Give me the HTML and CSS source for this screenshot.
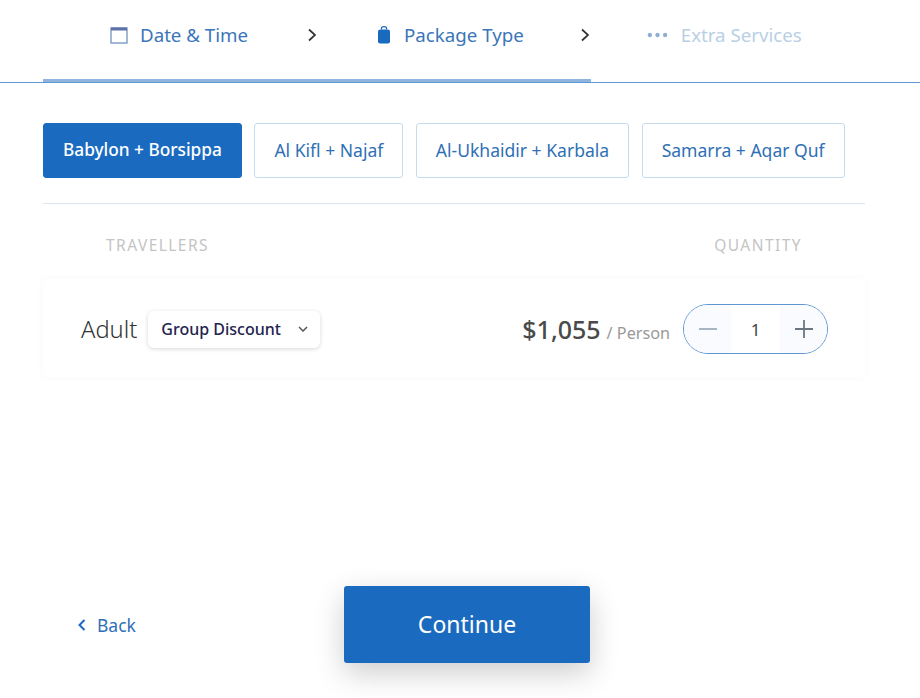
FILE: index.html
```html
<!DOCTYPE html>
<html lang="en">
<head>
<meta charset="utf-8">
<title>Package Type</title>
<link rel="stylesheet" href="styles.css">
</head>
<body>
<header class="steps">
  <div class="step">
    <svg class="icon cal" viewBox="0 0 18 18" width="18" height="18"><rect x="1" y="2" width="16" height="15" fill="none" stroke="#6f93c4" stroke-width="1.3"/><rect x="1" y="1.5" width="16" height="3" fill="#5f6fa8"/></svg>
    <span>Date &amp; Time</span>
  </div>
  <svg class="chev" viewBox="0 0 10 14" width="10" height="14"><path d="M2 1.5 L8 7 L2 12.5" fill="none" stroke="#333" stroke-width="1.7"/></svg>
  <div class="step">
    <svg class="icon bag" viewBox="0 0 14 18" width="14" height="18"><path d="M4.5 3.5V2.2C4.5 1.2 5.2.6 7 .6s2.5.6 2.5 1.6v1.3" fill="none" stroke="#1a6bc0" stroke-width="1.2"/><rect x="1" y="3.5" width="12" height="14" rx="2" fill="#1a6bc0"/></svg>
    <span>Package Type</span>
  </div>
  <svg class="chev second" viewBox="0 0 10 14" width="10" height="14"><path d="M2 1.5 L8 7 L2 12.5" fill="none" stroke="#333" stroke-width="1.7"/></svg>
  <div class="step off">
    <svg class="icon dots" viewBox="0 0 22 6" width="21" height="6"><circle cx="3" cy="3" r="2.3"/><circle cx="11" cy="3" r="2.3"/><circle cx="19" cy="3" r="2.3"/></svg>
    <span>Extra Services</span>
  </div>
  <div class="progress"></div>
</header>

<nav class="tabs">
  <button class="tab active">Babylon + Borsippa</button>
  <button class="tab">Al Kifl + Najaf</button>
  <button class="tab">Al-Ukhaidir + Karbala</button>
  <button class="tab">Samarra + Aqar Quf</button>
</nav>

<div class="heads">
  <span>TRAVELLERS</span>
  <span>QUANTITY</span>
</div>

<section class="row">
  <span class="kind">Adult</span>
  <div class="select">
    <span>Group Discount</span>
    <svg viewBox="0 0 10 6" width="10" height="6"><path d="M1 1 L5 5 L9 1" fill="none" stroke="#555" stroke-width="1.5"/></svg>
  </div>
  <div class="price"><b>$1,055</b><span>/ Person</span></div>
  <div class="qty">
    <span class="qbtn minus"><svg viewBox="0 0 18 18" width="18" height="18"><path d="M0 9H18" stroke="#a9b4c2" stroke-width="2"/></svg></span>
    <span class="num">1</span>
    <span class="qbtn plus"><svg viewBox="0 0 18 18" width="18" height="18"><path d="M0 9H18M9 0V18" stroke="#6c7680" stroke-width="1.8"/></svg></span>
  </div>
</section>

<footer class="foot">
  <a class="back"><svg viewBox="0 0 8 12" width="8" height="12"><path d="M6.5 1 L1.5 6 L6.5 11" fill="none" stroke="#1a6bc0" stroke-width="2"/></svg>Back</a>
  <button class="cta">Continue</button>
</footer>
</body>
</html>
```
FILE: styles.css
```css
* { box-sizing: border-box; }
html, body { margin: 0; height: 100%; background: #fff; }
body { font-family: "Noto Sans", "Open Sans", sans-serif; color: #333; overflow: hidden; }

.steps {
  position: relative;
  display: flex;
  align-items: center;
  height: 83px;
  padding: 0 0 13px 110px;
  border-bottom: 1px solid #5f97d3;
}
.step { display: flex; align-items: center; color: #3a76b8; font-size: 18.7px; line-height: 24px; }
.step .icon { flex: none; }
.cal { margin-right: 12px; }
.bag { margin-right: 13px; }
.dots { margin-right: 13px; fill: #8fb0d6; }
.step.off { color: #b9cfe6; }
.chev { flex: none; margin: 0 60px 0 59px; }
.chev.second { margin: 0 57px 0 56px; }
.progress {
  position: absolute;
  left: 43px;
  bottom: 0;
  width: 548px;
  height: 3px;
  background: #8fb4de;
}

.tabs {
  display: flex;
  gap: 12.5px;
  margin: 40px 55px 0 43px;
  padding-bottom: 25px;
  border-bottom: 1px solid #d9e4ec;
}
.tab {
  height: 55px;
  padding: 0 19px 2px;
  background: #fff;
  border: 1px solid #c4dcee;
  border-radius: 3px;
  color: #2f70b5;
  font: 400 17.55px "Noto Sans", sans-serif;
}
.tab.active { background: #1a6bc0; border-color: #1a6bc0; color: #fff; font-weight: 500; font-size: 17.25px; }

.heads {
  display: flex;
  justify-content: space-between;
  margin: 31px 118px 0 106px;
  color: #c4c4c4;
  font-size: 15.5px;
  line-height: 20px;
  letter-spacing: 1.45px;
}

.row {
  display: flex;
  align-items: center;
  height: 98px;
  margin: 24px 55px 0 43px;
  padding: 2px 37px 0 38px;
  background: #fff;
  box-shadow: 0 0 8px rgba(0, 0, 0, .03);
}
.kind { font-size: 23.7px; font-weight: 300; color: #333; margin-right: 11px; }
.select {
  display: flex;
  align-items: center;
  justify-content: space-between;
  width: 172px;
  height: 37px;
  padding: 0 12px 0 13px;
  border-radius: 6px;
  background: #fff;
  box-shadow: 0 1px 4px rgba(0, 0, 0, .16);
  color: #23234f;
  font-size: 16px;
  font-weight: 500;
}
.price { display: flex; align-items: baseline; margin-left: auto; }
.price b { font-size: 25px; font-weight: 500; color: #4a4a4a; }
.price span { margin-left: 6px; font-size: 16.2px; color: #999; }
.qty {
  display: flex;
  align-items: center;
  width: 145px;
  height: 50px;
  margin-left: 13px;
  border: 1.6px solid #5f97d3;
  border-radius: 25px;
  overflow: hidden;
}
.qbtn { display: flex; align-items: center; justify-content: center; width: 47px; height: 100%; background: #fafbfe; }
.num { flex: 1; text-align: center; font-size: 17px; color: #444; }

.foot {
  display: flex;
  align-items: center;
  margin: 209px 0 0 78px;
}
.back { display: flex; align-items: center; gap: 11px; width: 266px; color: #2f70b5; font-size: 17.5px; }
.cta {
  width: 246px;
  height: 77px;
  padding-bottom: 2px;
  background: #1a6bc0;
  border: 0;
  border-radius: 3px;
  color: #fff;
  font: 400 23px "Noto Sans", sans-serif;
  box-shadow: 0 10px 30px rgba(0, 0, 0, .2);
}
```
